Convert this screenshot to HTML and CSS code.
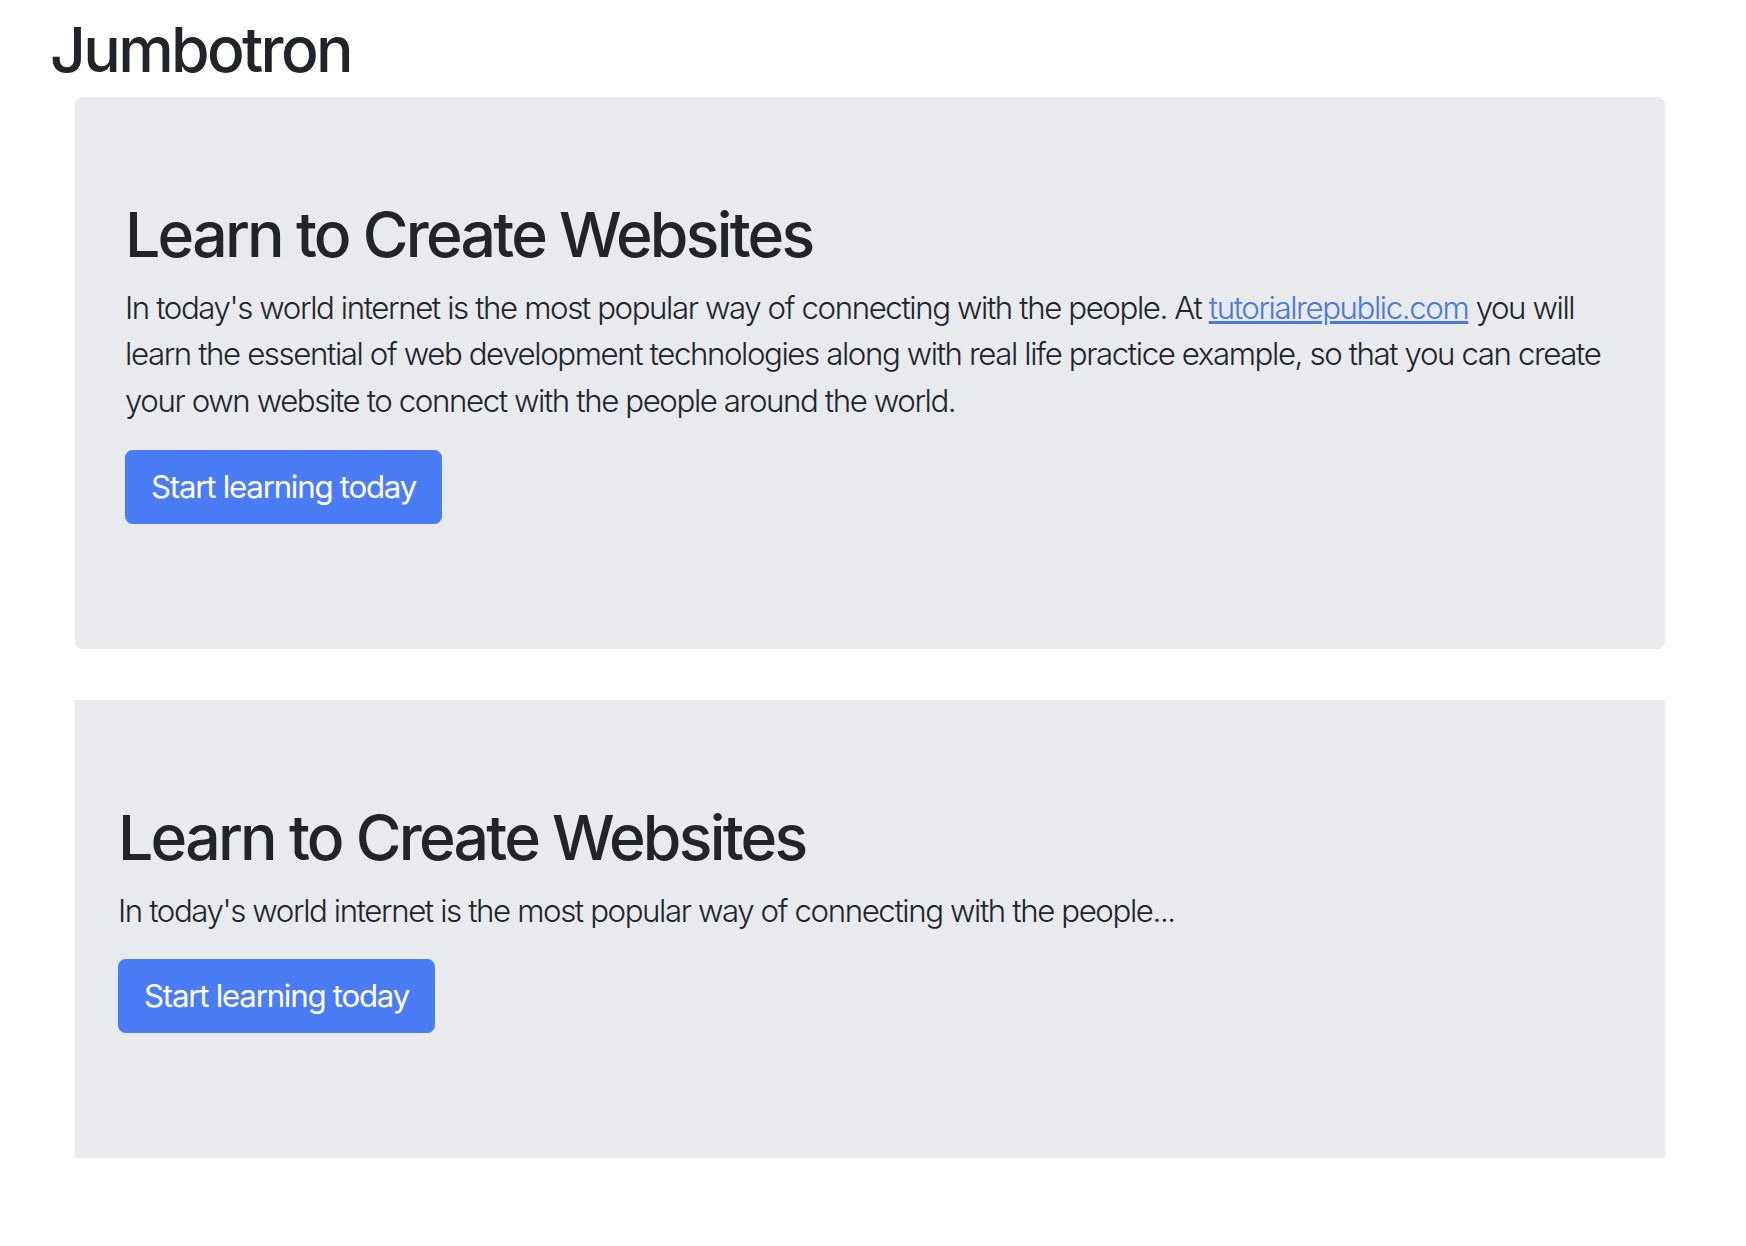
FILE: index.html
```html
<!DOCTYPE html>
<html lang="en">
<head>
<meta charset="utf-8">
<title>Jumbotron</title>
<link rel="stylesheet" href="styles.css">
</head>
<body>
<h1 class="page-title">Jumbotron</h1>

<div class="jumbotron">
  <h1 class="jumbo-heading">Learn to Create Websites</h1>
  <p class="lead">In today's world internet is the most popular way of connecting with the people. At <a class="link" href="#">tutorialrepublic.com</a> you will learn the essential of web development technologies along with real life practice example, so that you can create your own website to connect with the people around the world.</p>
  <p class="btn-row"><a class="btn" href="#">Start learning today</a></p>
</div>

<div class="jumbotron jumbotron-fluid">
  <div class="container">
    <h1 class="jumbo-heading">Learn to Create Websites</h1>
    <p class="lead">In today's world internet is the most popular way of connecting with the people...</p>
    <p class="btn-row"><a class="btn" href="#">Start learning today</a></p>
  </div>
</div>
</body>
</html>
```
FILE: styles.css
```css
html, body {
  background: #ffffff;
}
body {
  margin: 0;
  color: #212529;
  font-family: Inter, "Noto Sans", "Liberation Sans", sans-serif;
}
.page-title {
  margin: 0 0 10px 0;
  padding: 12px 0 0 50px;
  font-size: 62.5px;
  line-height: 75px;
  font-weight: 500;
  letter-spacing: -0.043em;
}
.jumbotron {
  margin: 0 81px 51px 75px;
  padding: 100px 50px;
  background: #e9eaee;
  border-radius: 7.5px;
}
.jumbotron-fluid {
  border-radius: 0;
  padding: 100px 0 100px 0;
}
.container {
  padding-left: 43px;
}
.jumbo-heading {
  margin: 0 0 12.5px 0;
  font-size: 62.5px;
  line-height: 75px;
  font-weight: 500;
  letter-spacing: -0.044em;
}
.lead {
  margin: 0 0 25px 0;
  font-size: 31.25px;
  line-height: 46.875px;
  font-weight: 300;
  letter-spacing: -0.045em;
}
.link {
  color: #4779de;
  text-decoration: underline;
}
.btn-row {
  margin: 0 0 25px 0;
  font-size: 31.25px;
  line-height: 46.875px;
}
.btn {
  display: inline-block;
  vertical-align: top;
  padding: 12.5px 25px;
  border: 1.5px solid #4a7cf6;
  border-radius: 7.5px;
  background: #4a7cf6;
  color: #ffffff;
  font-size: 31.25px;
  line-height: 46.875px;
  font-weight: 400;
  letter-spacing: -0.04em;
  text-decoration: none;
}
```
